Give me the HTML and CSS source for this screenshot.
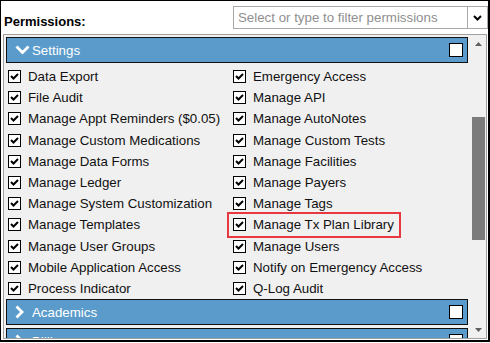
FILE: index.html
```html
<!DOCTYPE html>
<html lang="en">
<head>
  <meta charset="UTF-8" />
  <meta name="viewport" content="width=device-width, initial-scale=1.0" />
  <title>Permissions</title>
  <link rel="stylesheet" href="styles.css">
</head>
<body>
  <div class="frame">
    <div class="toolbar">
      <label class="title">Permissions:</label>
      <div class="filter">
        <span class="filter-text">Select or type to filter permissions</span>
        <span class="filter-btn">
          <svg width="9" height="6" viewBox="0 0 9 6"><polyline points="1,1 4.5,4.5 8,1" fill="none" stroke="#000" stroke-width="2"/></svg>
        </span>
      </div>
    </div>

    <div class="panel">
      <div class="list">
        <div class="group-head">
          <svg class="chev" width="15" height="10" viewBox="0 0 15 10"><polyline points="1.5,1.5 7.5,7.5 13.5,1.5" fill="none" stroke="#fff" stroke-width="2.8"/></svg>
          <span>Settings</span>
          <span class="head-box"></span>
        </div>

        <div class="grid">
          <div class="item"><span class="box"><svg width="11" height="11" viewBox="0 0 11 11"><polyline points="2,5 4.5,7.5 9,3" fill="none" stroke="#000" stroke-width="2"/></svg></span>Data Export</div>
          <div class="item"><span class="box"><svg width="11" height="11" viewBox="0 0 11 11"><polyline points="2,5 4.5,7.5 9,3" fill="none" stroke="#000" stroke-width="2"/></svg></span>File Audit</div>
          <div class="item"><span class="box"><svg width="11" height="11" viewBox="0 0 11 11"><polyline points="2,5 4.5,7.5 9,3" fill="none" stroke="#000" stroke-width="2"/></svg></span>Manage Appt Reminders ($0.05)</div>
          <div class="item"><span class="box"><svg width="11" height="11" viewBox="0 0 11 11"><polyline points="2,5 4.5,7.5 9,3" fill="none" stroke="#000" stroke-width="2"/></svg></span>Manage Custom Medications</div>
          <div class="item"><span class="box"><svg width="11" height="11" viewBox="0 0 11 11"><polyline points="2,5 4.5,7.5 9,3" fill="none" stroke="#000" stroke-width="2"/></svg></span>Manage Data Forms</div>
          <div class="item"><span class="box"><svg width="11" height="11" viewBox="0 0 11 11"><polyline points="2,5 4.5,7.5 9,3" fill="none" stroke="#000" stroke-width="2"/></svg></span>Manage Ledger</div>
          <div class="item"><span class="box"><svg width="11" height="11" viewBox="0 0 11 11"><polyline points="2,5 4.5,7.5 9,3" fill="none" stroke="#000" stroke-width="2"/></svg></span>Manage System Customization</div>
          <div class="item"><span class="box"><svg width="11" height="11" viewBox="0 0 11 11"><polyline points="2,5 4.5,7.5 9,3" fill="none" stroke="#000" stroke-width="2"/></svg></span>Manage Templates</div>
          <div class="item"><span class="box"><svg width="11" height="11" viewBox="0 0 11 11"><polyline points="2,5 4.5,7.5 9,3" fill="none" stroke="#000" stroke-width="2"/></svg></span>Manage User Groups</div>
          <div class="item"><span class="box"><svg width="11" height="11" viewBox="0 0 11 11"><polyline points="2,5 4.5,7.5 9,3" fill="none" stroke="#000" stroke-width="2"/></svg></span>Mobile Application Access</div>
          <div class="item"><span class="box"><svg width="11" height="11" viewBox="0 0 11 11"><polyline points="2,5 4.5,7.5 9,3" fill="none" stroke="#000" stroke-width="2"/></svg></span>Process Indicator</div>

          <div class="item"><span class="box"><svg width="11" height="11" viewBox="0 0 11 11"><polyline points="2,5 4.5,7.5 9,3" fill="none" stroke="#000" stroke-width="2"/></svg></span>Emergency Access</div>
          <div class="item"><span class="box"><svg width="11" height="11" viewBox="0 0 11 11"><polyline points="2,5 4.5,7.5 9,3" fill="none" stroke="#000" stroke-width="2"/></svg></span>Manage API</div>
          <div class="item"><span class="box"><svg width="11" height="11" viewBox="0 0 11 11"><polyline points="2,5 4.5,7.5 9,3" fill="none" stroke="#000" stroke-width="2"/></svg></span>Manage AutoNotes</div>
          <div class="item"><span class="box"><svg width="11" height="11" viewBox="0 0 11 11"><polyline points="2,5 4.5,7.5 9,3" fill="none" stroke="#000" stroke-width="2"/></svg></span>Manage Custom Tests</div>
          <div class="item"><span class="box"><svg width="11" height="11" viewBox="0 0 11 11"><polyline points="2,5 4.5,7.5 9,3" fill="none" stroke="#000" stroke-width="2"/></svg></span>Manage Facilities</div>
          <div class="item"><span class="box"><svg width="11" height="11" viewBox="0 0 11 11"><polyline points="2,5 4.5,7.5 9,3" fill="none" stroke="#000" stroke-width="2"/></svg></span>Manage Payers</div>
          <div class="item"><span class="box"><svg width="11" height="11" viewBox="0 0 11 11"><polyline points="2,5 4.5,7.5 9,3" fill="none" stroke="#000" stroke-width="2"/></svg></span>Manage Tags</div>
          <div class="item highlight"><span class="box"><svg width="11" height="11" viewBox="0 0 11 11"><polyline points="2,5 4.5,7.5 9,3" fill="none" stroke="#000" stroke-width="2"/></svg></span>Manage Tx Plan Library</div>
          <div class="item"><span class="box"><svg width="11" height="11" viewBox="0 0 11 11"><polyline points="2,5 4.5,7.5 9,3" fill="none" stroke="#000" stroke-width="2"/></svg></span>Manage Users</div>
          <div class="item"><span class="box"><svg width="11" height="11" viewBox="0 0 11 11"><polyline points="2,5 4.5,7.5 9,3" fill="none" stroke="#000" stroke-width="2"/></svg></span>Notify on Emergency Access</div>
          <div class="item"><span class="box"><svg width="11" height="11" viewBox="0 0 11 11"><polyline points="2,5 4.5,7.5 9,3" fill="none" stroke="#000" stroke-width="2"/></svg></span>Q-Log Audit</div>
        </div>

        <div class="group-head">
          <svg class="chev" width="15" height="14" viewBox="0 0 15 14"><polyline points="1.5,1.5 7,7 1.5,12.5" fill="none" stroke="#fff" stroke-width="2.8"/></svg>
          <span>Academics</span>
          <span class="head-box"></span>
        </div>

        <div class="group-head next">
          <svg class="chev" width="15" height="14" viewBox="0 0 15 14"><polyline points="1.5,1.5 7,7 1.5,12.5" fill="none" stroke="#fff" stroke-width="2.8"/></svg>
          <span>Billing</span>
          <span class="head-box"></span>
        </div>
      </div>

      <div class="scrollbar">
        <div class="sb-btn">
          <svg width="7" height="4" viewBox="0 0 7 4"><polygon points="0,4 3.5,0 7,4" fill="#606060"/></svg>
        </div>
        <div class="sb-track">
          <div class="sb-thumb"></div>
        </div>
        <div class="sb-btn">
          <svg width="7" height="4" viewBox="0 0 7 4"><polygon points="0,0 3.5,4 7,0" fill="#606060"/></svg>
        </div>
      </div>
    </div>
  </div>
</body>
</html>
```

FILE: styles.css
```css
html,
body {
  margin: 0;
  background-color: #ffffff;
}

body {
  font-family: "Liberation Sans", Arial, sans-serif;
  font-size: 13.3px;
  color: #111;
}

.frame {
  box-sizing: border-box;
  width: 490px;
  height: 342px;
  border: 1px solid #000;
  border-right-width: 2px;
  border-bottom-width: 2px;
  overflow: hidden;
}

.toolbar {
  display: flex;
  align-items: flex-start;
  height: 33px;
  padding-left: 3px;
}

.title {
  margin-top: 13px;
  font-size: 13px;
  font-weight: bold;
  line-height: 15px;
  color: #000;
}

.filter {
  display: flex;
  box-sizing: border-box;
  width: 255px;
  height: 23px;
  margin-top: 5px;
  margin-left: auto;
  border: 1px solid #a9a9a9;
  background-color: #fff;
}

.filter-text {
  flex: 1;
  padding-left: 4px;
  line-height: 21px;
  color: #8f8f8f;
  white-space: nowrap;
  overflow: hidden;
}

.filter-btn {
  display: flex;
  align-items: center;
  justify-content: center;
  width: 19px;
  border-left: 1px solid #a9a9a9;
}

.panel {
  display: flex;
  box-sizing: border-box;
  width: 484px;
  height: 305px;
  margin-left: 2px;
  border: 1px solid #a0a0a0;
  background-color: #f0f0f0;
  overflow: hidden;
}

.list {
  flex: 1;
  min-width: 0;
  padding: 2px 2px 0;
  overflow: hidden;
}

.group-head {
  display: flex;
  align-items: center;
  gap: 2px;
  box-sizing: border-box;
  height: 26px;
  padding-left: 8px;
  border: 1px solid #111;
  background-color: #5b9bcb;
  color: #fff;
}

.group-head.next {
  margin-top: 3px;
}

.chev {
  flex: none;
}

.head-box {
  box-sizing: border-box;
  width: 14px;
  height: 14px;
  margin-left: auto;
  margin-right: 4px;
  border: 1px solid #000;
  background-color: #fff;
}

.grid {
  display: grid;
  grid-template-columns: 225px 1fr;
  grid-template-rows: repeat(11, 21.2px);
  grid-auto-flow: column;
  margin-top: 3px;
}

.item {
  display: flex;
  align-items: center;
  gap: 7px;
  padding-left: 2px;
  white-space: nowrap;
}

.box {
  display: flex;
  box-sizing: border-box;
  width: 13px;
  height: 13px;
  border: 1px solid #000;
  background-color: #fff;
}

.highlight {
  position: relative;
  justify-self: start;
}

.highlight::after {
  content: "";
  position: absolute;
  left: -4px;
  right: -7px;
  top: -2px;
  bottom: -2px;
  border: 2px solid #e8383f;
}

.scrollbar {
  display: flex;
  flex-direction: column;
  width: 16px;
}

.sb-btn {
  display: flex;
  align-items: center;
  justify-content: center;
  height: 17px;
}

.sb-track {
  flex: 1;
}

.sb-thumb {
  width: 13px;
  height: 123px;
  margin-top: 65px;
  margin-left: 2px;
  background-color: #7b7b7b;
}
```
